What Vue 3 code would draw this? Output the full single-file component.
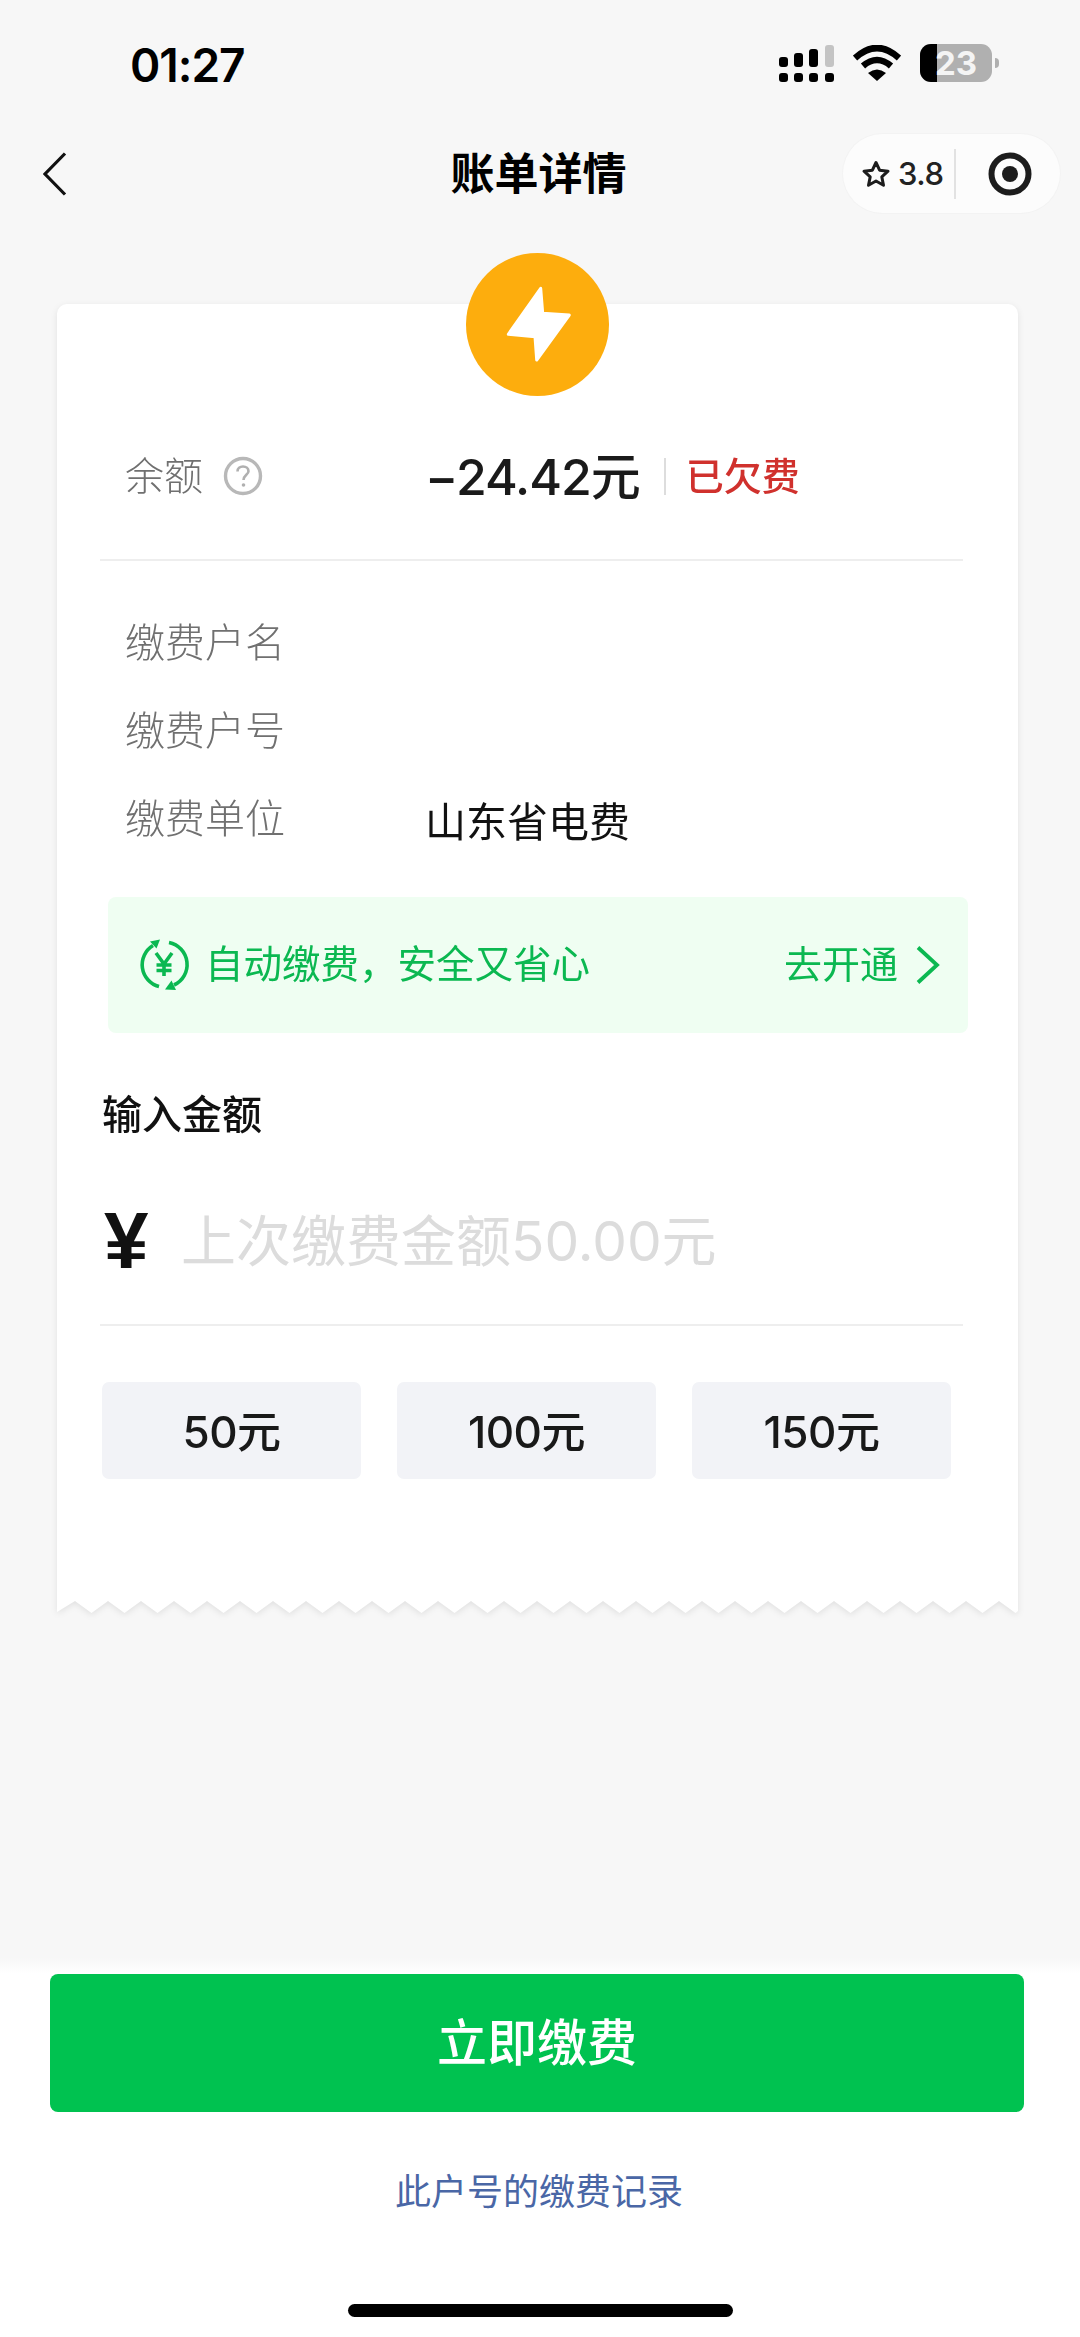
<template>
  <div class="page">
    <div class="status">
      <span class="time">01:27</span>
      <div class="status-icons">
        <svg class="signal" width="55" height="38" viewBox="0 0 55 38">
          <rect x="0" y="13" width="9" height="10" rx="3" />
          <rect x="15" y="9" width="9" height="14" rx="3" />
          <rect x="30" y="5" width="9" height="18" rx="3" />
          <rect x="46" y="1" width="9" height="22" rx="3" fill="#c4c4c4" />
          <rect x="0" y="29" width="9" height="9" rx="3" />
          <rect x="15" y="29" width="9" height="9" rx="3" />
          <rect x="30" y="29" width="9" height="9" rx="3" />
          <rect x="46" y="29" width="9" height="9" rx="3" />
        </svg>
        <svg class="wifi" width="48" height="36" viewBox="0 0 48 36">
          <path d="M2 13Q24 -7 46 13" fill="none" stroke="#000" stroke-width="6.5" />
          <path d="M10 21Q24 9 38 21" fill="none" stroke="#000" stroke-width="6.5" />
          <path d="M15 28Q24 21 33 28L24 36Z" />
        </svg>
        <div class="battery">
          <div class="battery-fill"></div>
          <span class="battery-num">23</span>
        </div>
        <div class="battery-tip"></div>
      </div>
    </div>

    <div class="nav">
      <svg class="back" width="24" height="44" viewBox="0 0 24 44">
        <path d="M22 1.5L2 22L22 42.5" fill="none" stroke="#111" stroke-width="3.2" />
      </svg>
      <div class="title">账单详情</div>
      <div class="capsule">
        <svg width="30" height="28" viewBox="0 0 30 28">
          <path d="M15 2.5L18.6 10.2L27 11.2L20.8 16.9L22.5 25.2L15 21L7.5 25.2L9.2 16.9L3 11.2L11.4 10.2Z" fill="none" stroke="#1c1c1c" stroke-width="3" stroke-linejoin="round" />
        </svg>
        <span class="score">3.8</span>
        <i class="capsule-line"></i>
        <svg class="target" width="44" height="44" viewBox="0 0 44 44">
          <circle cx="22" cy="22" r="18.5" fill="none" stroke="#1c1c1c" stroke-width="6" />
          <circle cx="22" cy="22" r="8" fill="#1c1c1c" />
        </svg>
      </div>
    </div>

    <div class="receipt">
      <div class="sheet">
        <div class="sheet-body">
          <div class="balance">
            <span class="label">余额</span>
            <svg class="help" width="40" height="40" viewBox="0 0 40 40">
              <circle cx="20" cy="20" r="17.5" fill="none" stroke="#b8b8b8" stroke-width="3.4" />
              <path d="M14.5 15.5C14.5 12.4 17 10.5 20 10.5C23 10.5 25.5 12.5 25.5 15.2C25.5 18.6 20.5 19.2 20.5 24" fill="none" stroke="#b0b0b0" stroke-width="2.6" />
              <circle cx="20.5" cy="29" r="1.8" fill="#b0b0b0" />
            </svg>
            <span class="money">−24.42元</span>
            <i class="money-line"></i>
            <span class="owed">已欠费</span>
          </div>

          <div class="info">
            <div class="info-row" v-for="row in infoRows" :key="row.label">
              <span class="label">{{ row.label }}</span>
              <span class="info-value">{{ row.value }}</span>
            </div>
          </div>

          <div class="auto-pay">
            <svg width="52" height="52" viewBox="0 0 52 52">
              <g fill="none" stroke="#0bb851" stroke-width="3.6">
                <path d="M15 6.5A22.5 22.5 0 0 0 21 47.5" />
                <path d="M31 3.5A22.5 22.5 0 0 1 36 46" />
                <path d="M18 14L26 25L34 14M26 25V37M18.5 26H33.5M18.5 31.5H33.5" />
              </g>
              <path d="M12 2.5L22 0.5L18.5 9.5Z" fill="#0bb851" />
              <path d="M27 50.5L38 51L33.5 41.5Z" fill="#0bb851" />
            </svg>
            <span class="auto-text">自动缴费，安全又省心</span>
            <span class="auto-link">去开通</span>
            <svg class="auto-arrow" width="24" height="38" viewBox="0 0 24 38">
              <path d="M2 1.5L21 19L2 36.5" fill="none" stroke="#0bb851" stroke-width="3.8" />
            </svg>
          </div>

          <div class="input-title">输入金额</div>
          <div class="input-row">
            <span class="yen">¥</span>
            <span class="placeholder">上次缴费金额50.00元</span>
          </div>

          <div class="amounts">
            <div class="amount" v-for="a in amounts" :key="a">{{ a }}元</div>
          </div>
        </div>
        <svg class="zigzag" width="961" height="14" viewBox="0 0 961 14">
          <polygon :points="zigzag" fill="#fff" />
        </svg>
      </div>

      <div class="badge">
        <svg width="143" height="143" viewBox="0 0 143 143">
          <circle cx="71.5" cy="71.5" r="71.5" fill="#fdad0d" />
          <path d="M74.7 35.3L76.7 60.3L103.3 62L70.7 107L69 83.7L42.3 81.3Z" fill="#fff" stroke="#fff" stroke-width="3" stroke-linejoin="round" />
        </svg>
      </div>
    </div>

    <div class="footer">
      <div class="pay-btn">立即缴费</div>
      <div class="history">此户号的缴费记录</div>
      <div class="home-bar"></div>
    </div>
  </div>
</template>

<script setup>
const infoRows = [
  { label: '缴费户名', value: '' },
  { label: '缴费户号', value: '' },
  { label: '缴费单位', value: '山东省电费' },
]
const amounts = [50, 100, 150]

// bottom edge of the receipt, walked right to left
const pts = []
for (let x = 18; x < 961; x += 33) {
  pts.push(`${x},1`)
  if (x + 16.5 < 961) pts.push(`${x + 16.5},13`)
}
const zigzag = `0,0 961,0 961,11 ${pts.reverse().join(' ')} 0,12`
</script>

<style scoped>
.page {
  width: 1080px;
  height: 2337px;
  display: flex;
  flex-direction: column;
  background: #f7f7f7;
  font-family: Inter, "Noto Sans CJK SC", sans-serif;
  color: #111;
  overflow: hidden;
}

/* status bar */
.status {
  height: 134px;
  box-sizing: border-box;
  padding: 44px 81px 0 130px;
  display: flex;
  justify-content: space-between;
  align-items: flex-start;
}
.time {
  font-size: 46px;
  line-height: 42px;
  font-weight: 600;
  letter-spacing: -1px;
  color: #000;
}
.status-icons {
  display: flex;
  align-items: flex-start;
}
.signal {
  margin-right: 19px;
}
.wifi {
  margin: 1px 19px 0 0;
}
.battery {
  position: relative;
  width: 72px;
  height: 38px;
  border-radius: 11px;
  background: #b0b0b0;
  overflow: hidden;
}
.battery-fill {
  position: absolute;
  left: 0;
  top: 0;
  bottom: 0;
  width: 17px;
  background: #000;
}
.battery-num {
  position: absolute;
  left: 15px;
  top: 0;
  font-size: 33px;
  line-height: 38px;
  font-weight: 700;
  color: #f4f4f4;
}
.battery-tip {
  width: 4px;
  height: 10px;
  margin: 14px 0 0 3px;
  border-radius: 0 5px 5px 0;
  background: #b0b0b0;
}

/* nav */
.nav {
  height: 79px;
  padding: 0 20px;
  display: grid;
  grid-template-columns: 1fr auto 1fr;
  align-items: center;
}
.back {
  margin-left: 23px;
}
.title {
  margin-right: 3px;
  font-size: 44px;
  font-weight: 700;
  line-height: 60px;
  color: #000;
}
.capsule {
  justify-self: end;
  width: 217px;
  height: 79px;
  box-sizing: border-box;
  padding-left: 18px;
  display: flex;
  align-items: center;
  border-radius: 40px;
  background: #fcfcfc;
  box-shadow: 0 0 0 1px #f3f3f3;
}
.score {
  margin-left: 7px;
  font-size: 31px;
  font-weight: 500;
  color: #222;
  letter-spacing: -0.5px;
}
.capsule-line {
  width: 2px;
  height: 50px;
  margin-left: 11px;
  background: #e2e2e2;
}
.target {
  margin-left: 32px;
}

/* receipt card */
.receipt {
  position: relative;
  width: 961px;
  margin: 91px 0 0 57px;
}
.sheet {
  filter: drop-shadow(0 2px 3px rgba(0, 0, 0, 0.09));
}
.sheet-body {
  box-sizing: border-box;
  padding: 142px 55px 122px 43px;
  background: #fff;
  border-radius: 10px 10px 0 0;
}
.zigzag {
  display: block;
  margin-top: -1px;
}
.badge {
  position: absolute;
  left: 409px;
  top: -51px;
  width: 143px;
  height: 143px;
}
.badge svg {
  display: block;
}

.balance {
  height: 60px;
  padding: 0 0 53px 25px;
  display: flex;
  align-items: center;
  border-bottom: 2px solid #eeeeee;
}
.label {
  font-size: 39px;
  color: #707070;
  font-weight: 300;
}
.balance .label,
.money,
.owed {
  margin-bottom: 6px;
}
.help {
  margin-left: 20px;
}
.money {
  margin-left: 162px;
  font-size: 50px;
  font-weight: 500;
  color: #1a1a1a;
  letter-spacing: -1px;
}
.money-line {
  width: 2px;
  height: 37px;
  margin: 0 22px 0 24px;
  background: #dddddd;
}
.owed {
  margin-left: -2px;
  font-size: 38px;
  font-weight: 500;
  color: #d0312d;
}
.info {
  margin-top: 38px;
}
.info-row {
  height: 88px;
  padding-left: 25px;
  display: flex;
  align-items: center;
}
.info-row .label {
  width: 300px;
  margin-bottom: 6px;
  font-size: 40px;
}
.info-value {
  font-size: 41px;
  color: #111;
}

.auto-pay {
  width: 860px;
  height: 136px;
  box-sizing: border-box;
  margin: 34px 0 0 8px;
  padding: 0 28px 0 30px;
  display: flex;
  align-items: center;
  border-radius: 8px;
  background: #effef2;
  color: #0bb851;
}
.auto-text {
  margin: 0 0 8px 15px;
  font-size: 38.5px;
}
.auto-link {
  margin: 0 0 8px auto;
  font-size: 38px;
}
.auto-arrow {
  margin-left: 18px;
}

.input-title {
  margin: 52px 0 0 2px;
  font-size: 40px;
  line-height: 60px;
  font-weight: 500;
  color: #111;
}
.input-row {
  height: 140px;
  margin-top: 26px;
  padding-bottom: 13px;
  display: flex;
  align-items: center;
  border-bottom: 2px solid #eeeeee;
}
.yen {
  width: 81px;
  padding-left: 4px;
  box-sizing: border-box;
  font-family: "Liberation Sans", sans-serif;
  font-size: 80px;
  font-weight: 700;
  color: #111;
}
.placeholder {
  margin-bottom: 8px;
  font-size: 55px;
  color: #dcdcdc;
}
.amounts {
  margin: 56px 0 0 2px;
  display: flex;
  gap: 36px;
}
.amount {
  width: 259px;
  height: 97px;
  padding-bottom: 4px;
  box-sizing: border-box;
  display: flex;
  align-items: center;
  justify-content: center;
  border-radius: 7px;
  background: #f2f3f7;
  font-size: 44px;
  font-weight: 500;
  letter-spacing: -0.5px;
  color: #191919;
}

/* footer */
.footer {
  position: relative;
  margin-top: auto;
  height: 363px;
  box-sizing: border-box;
  padding: 0 56px 20px 50px;
  display: flex;
  flex-direction: column;
  background: #fff;
}
.footer::before {
  content: "";
  position: absolute;
  left: 0;
  right: 0;
  top: -17px;
  height: 17px;
  background: linear-gradient(#f7f7f7, #fff);
}
.pay-btn {
  height: 138px;
  box-sizing: border-box;
  padding-bottom: 8px;
  display: flex;
  align-items: center;
  justify-content: center;
  border-radius: 8px;
  background: #00c250;
  color: #fff;
  font-size: 50px;
  font-weight: 500;
}
.history {
  margin-top: 55px;
  padding-left: 4px;
  text-align: center;
  font-size: 36px;
  line-height: 50px;
  color: #4a67a6;
}
.home-bar {
  width: 385px;
  height: 13px;
  margin: auto 0 0 298px;
  border-radius: 7px;
  background: #000;
}
</style>
